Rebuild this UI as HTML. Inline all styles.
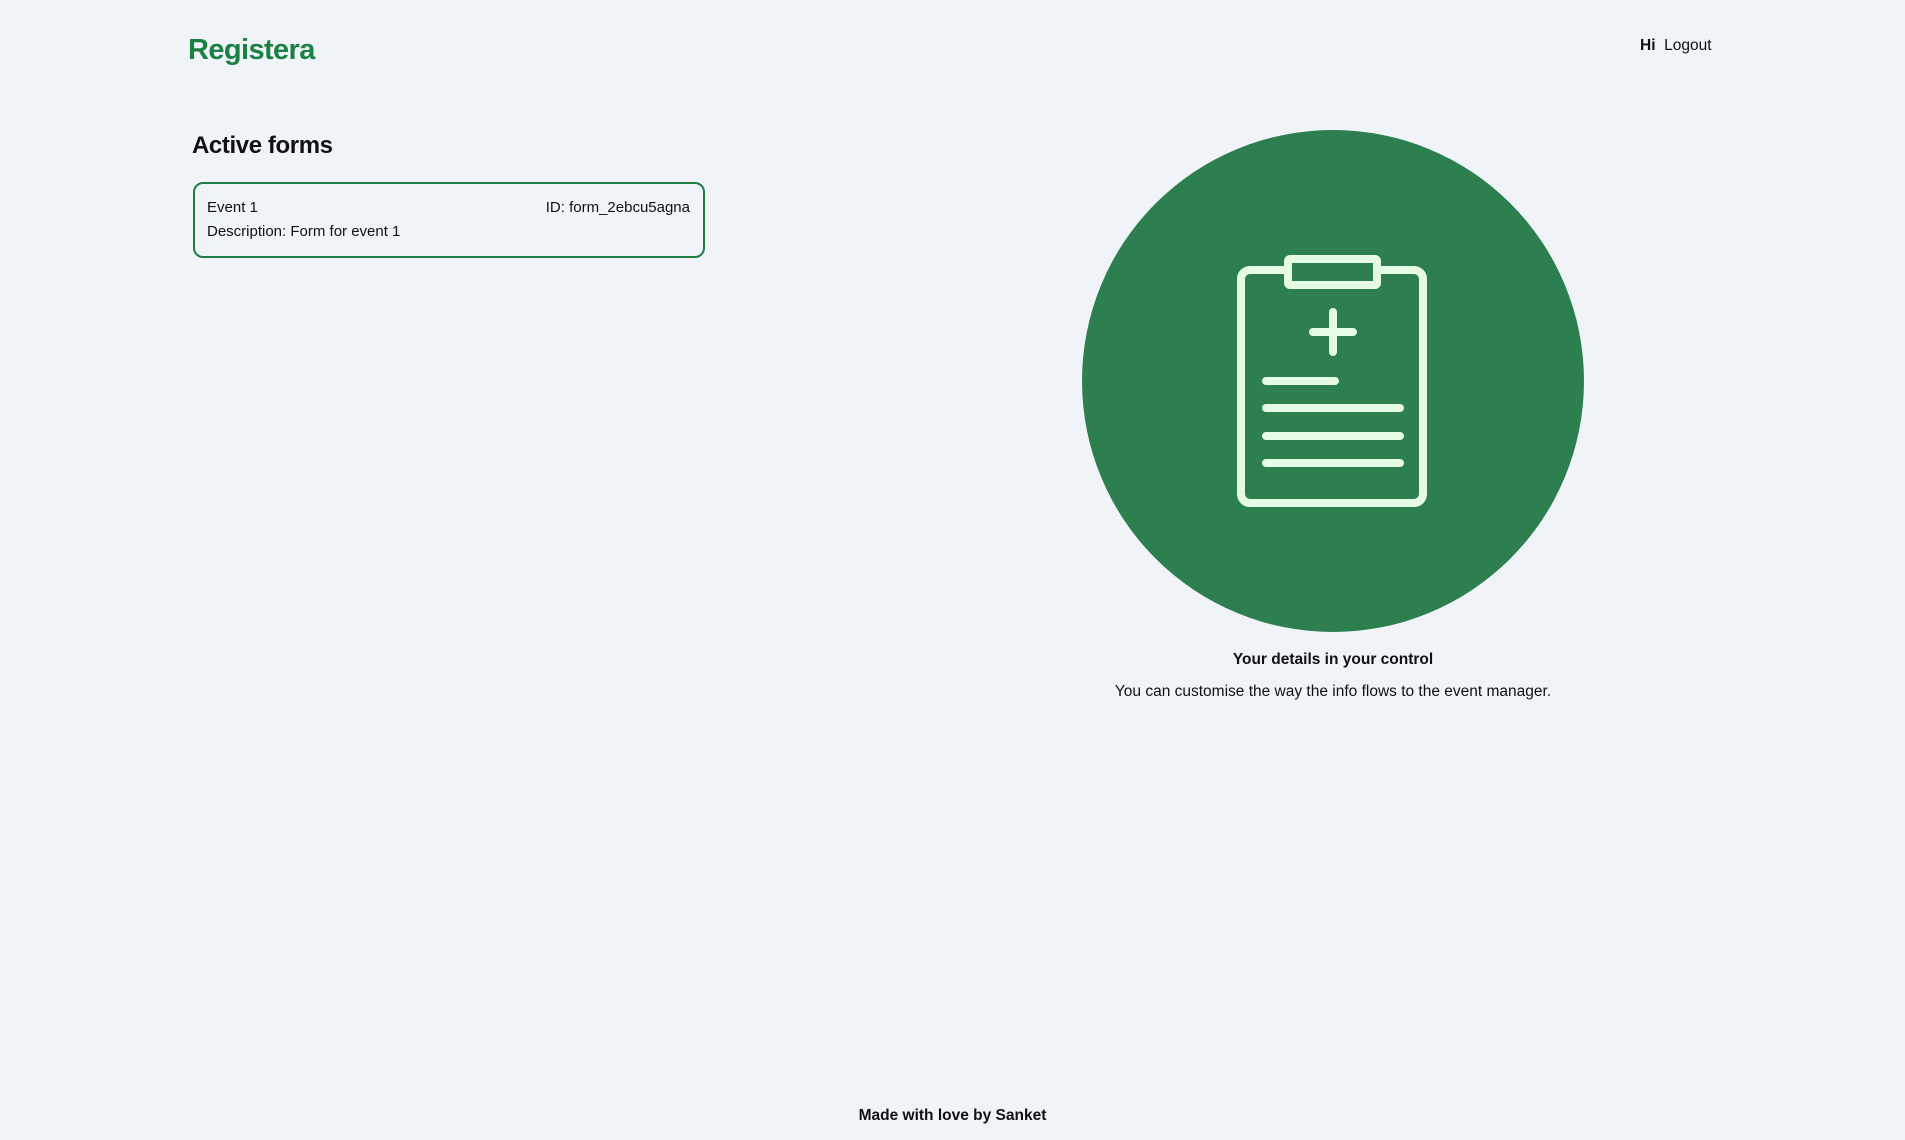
<!DOCTYPE html>
<html><head><meta charset="utf-8"><style>
html,body{margin:0;padding:0;width:1905px;height:1140px;background:#f0f4f9;font-family:"Liberation Sans",sans-serif;color:#111;overflow:hidden;position:relative}
.abs{position:absolute;white-space:nowrap}
</style></head><body>
<div class="abs" style="left:188px;top:34px;font-size:29px;font-weight:bold;color:#1a8043;letter-spacing:-0.6px">Registera</div>
<div class="abs" style="left:1640px;top:37px;font-size:15.5px"><b>Hi</b>&nbsp;&nbsp;Logout</div>
<div class="abs" style="left:192px;top:132px;font-size:24px;font-weight:bold;letter-spacing:-0.4px">Active forms</div>
<div class="abs" style="left:193px;top:182px;width:508px;height:72px;border:2px solid #1e7d43;border-radius:10px"></div>
<div class="abs" style="left:207px;top:199px;font-size:15px">Event 1</div>
<div class="abs" style="left:207px;top:223px;font-size:15px">Description: Form for event 1</div>
<div class="abs" style="right:1215px;top:199px;font-size:15px">ID: form_2ebcu5agna</div>
<svg class="abs" style="left:0;top:0" width="1905" height="1140">
<circle cx="1333" cy="381" r="251" fill="#2d7f4f"/>
<g fill="none" stroke="#e5fbe5" stroke-width="8" stroke-linecap="round">
<rect x="1241" y="270" width="182" height="233" rx="9"/>
<rect x="1288" y="259" width="89" height="26" rx="2" fill="#2d7f4f"/>
<path d="M1333 312V352M1313 332H1353"/>
<path d="M1266 381H1335M1266 408H1400M1266 436H1400M1266 463H1400"/>
</g>
</svg>
<div class="abs" style="left:0;width:2666px;top:651px;text-align:center;font-size:15.5px;font-weight:bold">Your details in your control</div>
<div class="abs" style="left:0;width:2666px;top:683px;text-align:center;font-size:15.5px">You can customise the way the info flows to the event manager.</div>
<div class="abs" style="left:0;width:1905px;top:1107px;text-align:center;font-size:15.5px;font-weight:bold">Made with love by Sanket</div>
</body></html>
